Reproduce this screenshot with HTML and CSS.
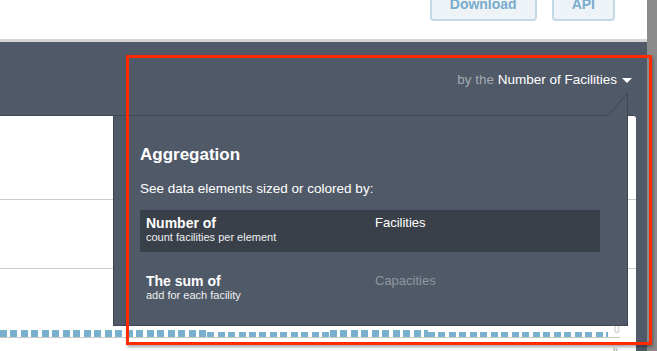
FILE: index.html
```html
<!DOCTYPE html>
<html lang="en">
<head>
    <meta charset="UTF-8">
    <meta name="viewport" content="width=device-width, initial-scale=1.0">
    <title>Facilities Map</title>
    <link rel="stylesheet" href="styles.css">
</head>
<body>
    <div class="window">
        <div class="page">
            <header class="topbar">
                <button class="btn">Download</button>
                <button class="btn">API</button>
            </header>

            <div class="stage">
                <div class="filterbar">
                    <div class="filter"><span class="filter-muted">by the</span> Number of Facilities<span class="caret"></span></div>
                </div>

                <div class="panel">
                    <div class="panel-row row-first"></div>
                    <div class="panel-row row-second"></div>
                    <div class="chart">
                        <div class="bars">
                            <div class="bar-seg tall" style="width: 207px"></div>
                            <div class="bar-seg" style="width: 123px"></div>
                            <div class="bar-seg tall" style="width: 98px"></div>
                            <div class="bar-seg" style="width: 180px"></div>
                        </div>
                        <span class="axis-label">0</span>
                    </div>
                    <div class="axis-line"></div>
                    <div class="more">&raquo;</div>
                </div>

                <!-- aggregation dropdown -->
                <div class="popup">
                    <svg class="notch" width="21" height="23" viewBox="0 0 21 23">
                        <polygon points="0,23 21,0 21,23" fill="#4f5967"/>
                        <polyline points="0.5,22.5 20.5,0.5 20.5,23" fill="none" stroke="#3f4752" stroke-width="1"/>
                    </svg>
                    <h3 class="popup-title">Aggregation</h3>
                    <p class="popup-text">See data elements sized or colored by:</p>
                    <div class="option option-active">
                        <div class="option-name">
                            <strong>Number of</strong>
                            <small>count facilities per element</small>
                        </div>
                        <div class="option-value">Facilities</div>
                    </div>
                    <div class="option">
                        <div class="option-name">
                            <strong>The sum of</strong>
                            <small>add for each facility</small>
                        </div>
                        <div class="option-value option-muted">Capacities</div>
                    </div>
                </div>
            </div>
        </div>
        <div class="scrollbar"></div>

        <!-- highlight frame drawn over the screenshot -->
        <div class="annotation"></div>
    </div>
</body>
</html>
```

FILE: styles.css
```css
body {
    margin: 0;
    font-family: 'Liberation Sans', Arial, Helvetica, sans-serif;
    background-color: #ffffff;
}
.window {
    position: relative;
    display: flex;
    width: 657px;
    height: 351px;
    overflow: hidden;
}
.page {
    width: 647px;
    display: flex;
    flex-direction: column;
}
.scrollbar {
    flex: 1;
    background-color: #8b8b8b;
}
.topbar {
    flex-shrink: 0;
    height: 42px;
    box-sizing: border-box;
    border-bottom: 3px solid #d6d6d6;
    display: flex;
    justify-content: flex-end;
    align-items: flex-end;
    gap: 15px;
    padding: 0 32px 18px 0;
    overflow: hidden;
    background-color: white;
}
.btn {
    flex-shrink: 0;
    background-color: #eef3f7;
    border: 2px solid #c3d9e6;
    border-radius: 4px;
    color: #7aaccc;
    font-family: inherit;
    font-weight: bold;
    font-size: 14px;
    line-height: 16px;
    padding: 9px 18px 7px;
}
.stage {
    position: relative;
    flex: 1;
    display: flex;
    flex-direction: column;
    min-height: 0;
    background-color: #4f5967;
}
.filterbar {
    flex-shrink: 0;
    height: 73px;
    box-sizing: border-box;
    padding: 30px 15px 0 0;
    display: flex;
    justify-content: flex-end;
}
.filter {
    font-size: 13.5px;
    line-height: 16px;
    color: #ffffff;
}
.filter-muted {
    color: #a4aab2;
}
.caret {
    display: inline-block;
    width: 0;
    height: 0;
    margin-left: 5px;
    vertical-align: middle;
    border-left: 5px solid transparent;
    border-right: 5px solid transparent;
    border-top: 5px solid #ffffff;
}
.panel {
    flex: 1;
    min-height: 0;
    margin-right: 11px;
    background-color: white;
    border-top: 1px solid #434b56;
    border-top-right-radius: 3px;
}
.panel-row {
    border-bottom: 1px solid #cbcbcb;
}
.row-first {
    height: 83px;
}
.row-second {
    height: 68px;
}
.chart {
    display: flex;
    align-items: flex-end;
    height: 68px;
}
.bars {
    display: flex;
    align-items: flex-end;
    width: 608px;
}
.bar-seg {
    height: 5px;
    background: repeating-linear-gradient(to right, #79b0cd 0 7px, transparent 7px 10.5px);
}
.bar-seg.tall {
    height: 7px;
}
.axis-label {
    margin: 0 0 2px 6px;
    font-size: 10px;
    line-height: 10px;
    color: #c2c2c2;
}
.axis-line {
    width: 620px;
    height: 1px;
    background-color: #c9c9c9;
}
.more {
    margin: 7px 0 0 612px;
    font-size: 11px;
    line-height: 8px;
    color: #a0a0a0;
}
.popup {
    position: absolute;
    top: 73px;
    left: 113px;
    width: 515px;
    box-sizing: border-box;
    padding: 29px 27px 15px 26px;
    background-color: #4f5967;
    border: 1px solid #3f4752;
    color: #ffffff;
}
.notch {
    position: absolute;
    top: -23px;
    right: -1px;
    display: block;
}
.popup-title {
    margin: 0;
    font-size: 17px;
    line-height: 20px;
    font-weight: bold;
}
.popup-text {
    margin: 16px 0 13px;
    font-size: 13.5px;
    line-height: 16px;
}
.option {
    display: grid;
    grid-template-columns: 229px 1fr;
    height: 42px;
    box-sizing: border-box;
    padding: 5px 0 0 6px;
}
.option + .option {
    margin-top: 16px;
}
.option-active {
    background-color: #3a4049;
}
.option-name strong {
    display: block;
    font-size: 14px;
    line-height: 16px;
}
.option-name small {
    display: block;
    font-size: 11px;
    line-height: 13px;
    color: #eef0f2;
}
.option-value {
    font-size: 13px;
    line-height: 16px;
}
.option-muted {
    color: #8f969e;
}
.annotation {
    position: absolute;
    left: 126px;
    top: 55px;
    width: 526px;
    height: 290px;
    box-sizing: border-box;
    border: 3px solid #ff2a00;
    box-shadow: 1px 2px 3px rgba(0, 0, 0, 0.35);
}
```
